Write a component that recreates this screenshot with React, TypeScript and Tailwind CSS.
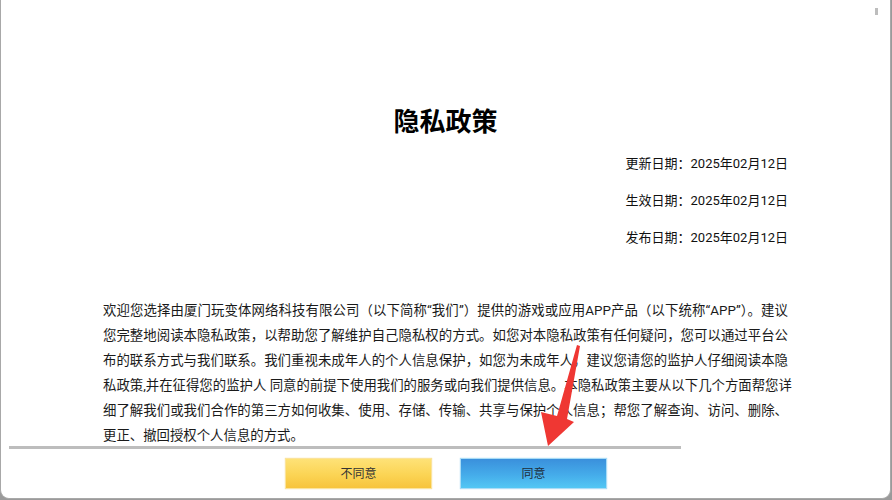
import React from "react";

const lines = [
  "欢迎您选择由厦门玩变体网络科技有限公司（以下简称“我们”）提供的游戏或应用APP产品（以下统称“APP”）。建议",
  "您完整地阅读本隐私政策，以帮助您了解维护自己隐私权的方式。如您对本隐私政策有任何疑问，您可以通过平台公",
  "布的联系方式与我们联系。我们重视未成年人的个人信息保护，如您为未成年人，建议您请您的监护人仔细阅读本隐",
  "私政策,并在征得您的监护人 同意的前提下使用我们的服务或向我们提供信息。本隐私政策主要从以下几个方面帮您详",
  "细了解我们或我们合作的第三方如何收集、使用、存储、传输、共享与保护个人信息；帮您了解查询、访问、删除、",
];

export default function App() {
  return (
    <div className="relative w-[892px] h-[500px] bg-[#9a9a9a] overflow-hidden [font-family:Roboto,'Noto_Sans_CJK_SC',sans-serif]">
      <div className="relative h-[499px] w-[891px] bg-white border-l border-r border-b border-[#a8a8a8] rounded-b-[9px] flex flex-col">
        <div className="h-[446px] px-[102px] pt-[107px]">
          <div className="text-center text-[26px] leading-[30px] font-bold text-black">隐私政策</div>
          <div className="mt-[17px] flex flex-col gap-[17px] text-right text-[13px] leading-[20px] text-[#111]">
            <div>更新日期：2025年02月12日</div>
            <div>生效日期：2025年02月12日</div>
            <div>发布日期：2025年02月12日</div>
          </div>
          <div className="mt-[50px] text-[13.4px] leading-[25px] text-[#1a1a1a]">
            {lines.map((l, i) => (
              <div key={i} className="whitespace-nowrap text-justify [text-align-last:justify]">
                {l}
              </div>
            ))}
            <div className="whitespace-nowrap">更正、撤回授权个人信息的方式。</div>
          </div>
        </div>
        <div className="ml-[8px] w-[672px] h-[3px] bg-[#bdbdbd]" />
        <div className="mt-[9px] flex pl-[284px] gap-[28px]">
          <button className="w-[147px] h-[31px] border border-[#fbe39b] bg-[linear-gradient(180deg,#fee277_0%,#fbd454_55%,#f7c43c_100%)] text-[12px] text-[#333] shadow-[0_0_1px_#f3d890]">
            不同意
          </button>
          <button className="w-[147px] h-[31px] border border-[#a9dcf6] bg-[linear-gradient(180deg,#3a90dc_0%,#45acea_55%,#52c7f4_100%)] text-[12px] text-[#1e2d3a] shadow-[0_0_1px_#9fd2f0]">
            同意
          </button>
        </div>
      </div>
      <div className="absolute left-[875px] top-[8px] w-[3px] h-[7px] bg-[#bdbdbd]" />
      <svg className="absolute inset-0 pointer-events-none" width="892" height="500" viewBox="0 0 892 500">
        <polygon
          points="577,345 580,346 567,419 574,422 548,446 541,412 557,416"
          fill="#ef3733"
        />
      </svg>
    </div>
  );
}
